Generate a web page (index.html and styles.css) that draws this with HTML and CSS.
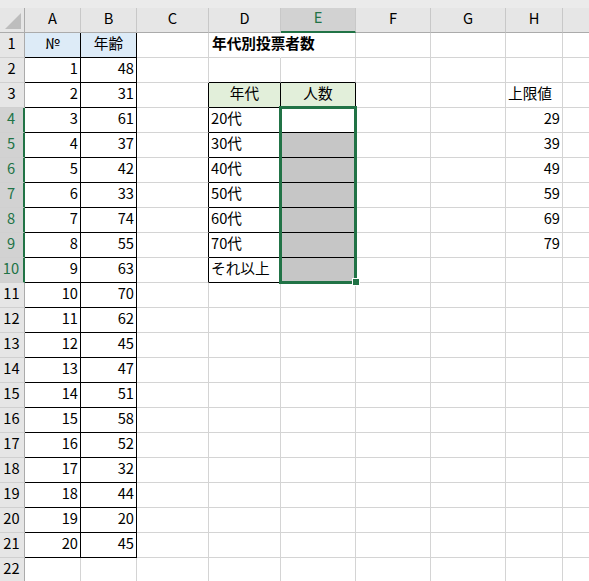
FILE: index.html
```html
<!DOCTYPE html>
<html lang="ja">
<head>
<meta charset="utf-8">
<title>年代別投票者数</title>
<link rel="stylesheet" href="styles.css">
</head>
<body>
<div class="topband"></div>
<div class="sheet">
  <div class="corner"><svg width="24" height="24" viewBox="0 0 24 24"><polygon points="21,5 21,21 5,21" fill="#bdbdbd"/></svg></div>
  <div class="ch">A</div><div class="ch">B</div><div class="ch">C</div><div class="ch">D</div><div class="ch sel">E</div><div class="ch">F</div><div class="ch">G</div><div class="ch">H</div><div class="ch"></div>

  <div class="rh">1</div>
  <div class="c k blue ctr">№</div><div class="c k blue ctr">年齢</div><div class="c"></div><div class="c title nr">年代別投票者数</div><div class="c"></div><div class="c"></div><div class="c"></div><div class="c"></div><div class="c"></div>

  <div class="rh">2</div>
  <div class="c k n">1</div><div class="c k n">48</div><div class="c"></div><div class="c kb"></div><div class="c kb"></div><div class="c"></div><div class="c"></div><div class="c"></div><div class="c"></div>

  <div class="rh">3</div>
  <div class="c k n">2</div><div class="c k n">31</div><div class="c kr"></div><div class="c k green ctr">年代</div><div class="c k green ctr">人数</div><div class="c"></div><div class="c"></div><div class="c">上限値</div><div class="c"></div>

  <div class="rh sel">4</div>
  <div class="c k n">3</div><div class="c k n">61</div><div class="c kr"></div><div class="c k">20代</div><div class="c k anchor"><div class="selbox"><span class="handle"></span></div></div><div class="c"></div><div class="c"></div><div class="c n">29</div><div class="c"></div>

  <div class="rh sel">5</div>
  <div class="c k n">4</div><div class="c k n">37</div><div class="c kr"></div><div class="c k">30代</div><div class="c k gray"></div><div class="c"></div><div class="c"></div><div class="c n">39</div><div class="c"></div>

  <div class="rh sel">6</div>
  <div class="c k n">5</div><div class="c k n">42</div><div class="c kr"></div><div class="c k">40代</div><div class="c k gray"></div><div class="c"></div><div class="c"></div><div class="c n">49</div><div class="c"></div>

  <div class="rh sel">7</div>
  <div class="c k n">6</div><div class="c k n">33</div><div class="c kr"></div><div class="c k">50代</div><div class="c k gray"></div><div class="c"></div><div class="c"></div><div class="c n">59</div><div class="c"></div>

  <div class="rh sel">8</div>
  <div class="c k n">7</div><div class="c k n">74</div><div class="c kr"></div><div class="c k">60代</div><div class="c k gray"></div><div class="c"></div><div class="c"></div><div class="c n">69</div><div class="c"></div>

  <div class="rh sel">9</div>
  <div class="c k n">8</div><div class="c k n">55</div><div class="c kr"></div><div class="c k">70代</div><div class="c k gray"></div><div class="c"></div><div class="c"></div><div class="c n">79</div><div class="c"></div>

  <div class="rh sel">10</div>
  <div class="c k n">9</div><div class="c k n">63</div><div class="c kr"></div><div class="c k">それ以上</div><div class="c k gray"></div><div class="c"></div><div class="c"></div><div class="c"></div><div class="c"></div>

  <div class="rh">11</div>
  <div class="c k n">10</div><div class="c k n">70</div><div class="c"></div><div class="c"></div><div class="c"></div><div class="c"></div><div class="c"></div><div class="c"></div><div class="c"></div>

  <div class="rh">12</div>
  <div class="c k n">11</div><div class="c k n">62</div><div class="c"></div><div class="c"></div><div class="c"></div><div class="c"></div><div class="c"></div><div class="c"></div><div class="c"></div>

  <div class="rh">13</div>
  <div class="c k n">12</div><div class="c k n">45</div><div class="c"></div><div class="c"></div><div class="c"></div><div class="c"></div><div class="c"></div><div class="c"></div><div class="c"></div>

  <div class="rh">14</div>
  <div class="c k n">13</div><div class="c k n">47</div><div class="c"></div><div class="c"></div><div class="c"></div><div class="c"></div><div class="c"></div><div class="c"></div><div class="c"></div>

  <div class="rh">15</div>
  <div class="c k n">14</div><div class="c k n">51</div><div class="c"></div><div class="c"></div><div class="c"></div><div class="c"></div><div class="c"></div><div class="c"></div><div class="c"></div>

  <div class="rh">16</div>
  <div class="c k n">15</div><div class="c k n">58</div><div class="c"></div><div class="c"></div><div class="c"></div><div class="c"></div><div class="c"></div><div class="c"></div><div class="c"></div>

  <div class="rh">17</div>
  <div class="c k n">16</div><div class="c k n">52</div><div class="c"></div><div class="c"></div><div class="c"></div><div class="c"></div><div class="c"></div><div class="c"></div><div class="c"></div>

  <div class="rh">18</div>
  <div class="c k n">17</div><div class="c k n">32</div><div class="c"></div><div class="c"></div><div class="c"></div><div class="c"></div><div class="c"></div><div class="c"></div><div class="c"></div>

  <div class="rh">19</div>
  <div class="c k n">18</div><div class="c k n">44</div><div class="c"></div><div class="c"></div><div class="c"></div><div class="c"></div><div class="c"></div><div class="c"></div><div class="c"></div>

  <div class="rh">20</div>
  <div class="c k n">19</div><div class="c k n">20</div><div class="c"></div><div class="c"></div><div class="c"></div><div class="c"></div><div class="c"></div><div class="c"></div><div class="c"></div>

  <div class="rh">21</div>
  <div class="c k n">20</div><div class="c k n">45</div><div class="c"></div><div class="c"></div><div class="c"></div><div class="c"></div><div class="c"></div><div class="c"></div><div class="c"></div>

  <div class="rh">22</div>
  <div class="c"></div><div class="c"></div><div class="c"></div><div class="c"></div><div class="c"></div><div class="c"></div><div class="c"></div><div class="c"></div><div class="c"></div>
</div>
</body>
</html>
```

FILE: styles.css
```css
html, body {
  margin: 0;
  padding: 0;
  overflow: hidden;
  background: #ffffff;
}

body {
  font-family: "Noto Sans CJK JP", "Noto Sans", sans-serif;
  font-size: 14.67px;
  color: #000000;
}

.topband {
  height: 8px;
  background: #ebebeb;
}

.sheet {
  display: grid;
  grid-template-columns: 25px 56px 56px 72px 72px 75px 75px 75px 57px 72px;
  grid-auto-rows: 25px;
  width: max-content;
}

.sheet > div {
  box-sizing: border-box;
  display: flex;
  align-items: flex-end;
  line-height: 20px;
  padding: 0 2px 4px 2px;
  white-space: nowrap;
  border-right: 1px solid #d4d4d4;
  border-bottom: 1px solid #d4d4d4;
}

.corner {
  background: #e6e6e6;
  padding: 0 !important;
  align-items: stretch !important;
  border-right: 1px solid #ababab !important;
  border-bottom: 1px solid #ababab !important;
}

.corner svg {
  display: block;
}

.ch {
  background: #e6e6e6;
  justify-content: center;
  border-right: 1px solid #c8c8c8 !important;
  border-bottom: 1px solid #ababab !important;
}

.ch.sel {
  background: #d2d2d2;
  color: #217346;
  border-bottom: 2px solid #217346 !important;
}

.rh {
  background: #e6e6e6;
  justify-content: center;
  padding: 0 1px 4px 0 !important;
  border-right: 1px solid #ababab !important;
  border-bottom: 1px solid #d0d0d0 !important;
}

.rh.sel {
  background: #d2d2d2;
  color: #217346;
  border-right: 2px solid #217346 !important;
}

.n {
  justify-content: flex-end;
}

.ctr {
  justify-content: center;
}

.title {
  font-weight: bold;
  padding-left: 3px !important;
}

.nr {
  border-right-color: transparent !important;
}

.k {
  border-right-color: #000000 !important;
  border-bottom-color: #000000 !important;
}

.kr {
  border-right-color: #000000 !important;
}

.kb {
  border-bottom-color: #000000 !important;
}

.blue {
  background: #ddebf7;
}

.green {
  background: #e2efda;
}

.gray {
  background: #c6c6c6;
}

.anchor {
  position: relative;
}

.selbox {
  position: absolute;
  left: -2px;
  top: -2px;
  width: 78px;
  height: 178px;
  box-sizing: border-box;
  border: 3px solid #217346;
  z-index: 2;
}

.handle {
  position: absolute;
  right: -5px;
  bottom: -4px;
  width: 6px;
  height: 6px;
  background: #217346;
  box-shadow: 0 0 0 1px #ffffff;
}
```
